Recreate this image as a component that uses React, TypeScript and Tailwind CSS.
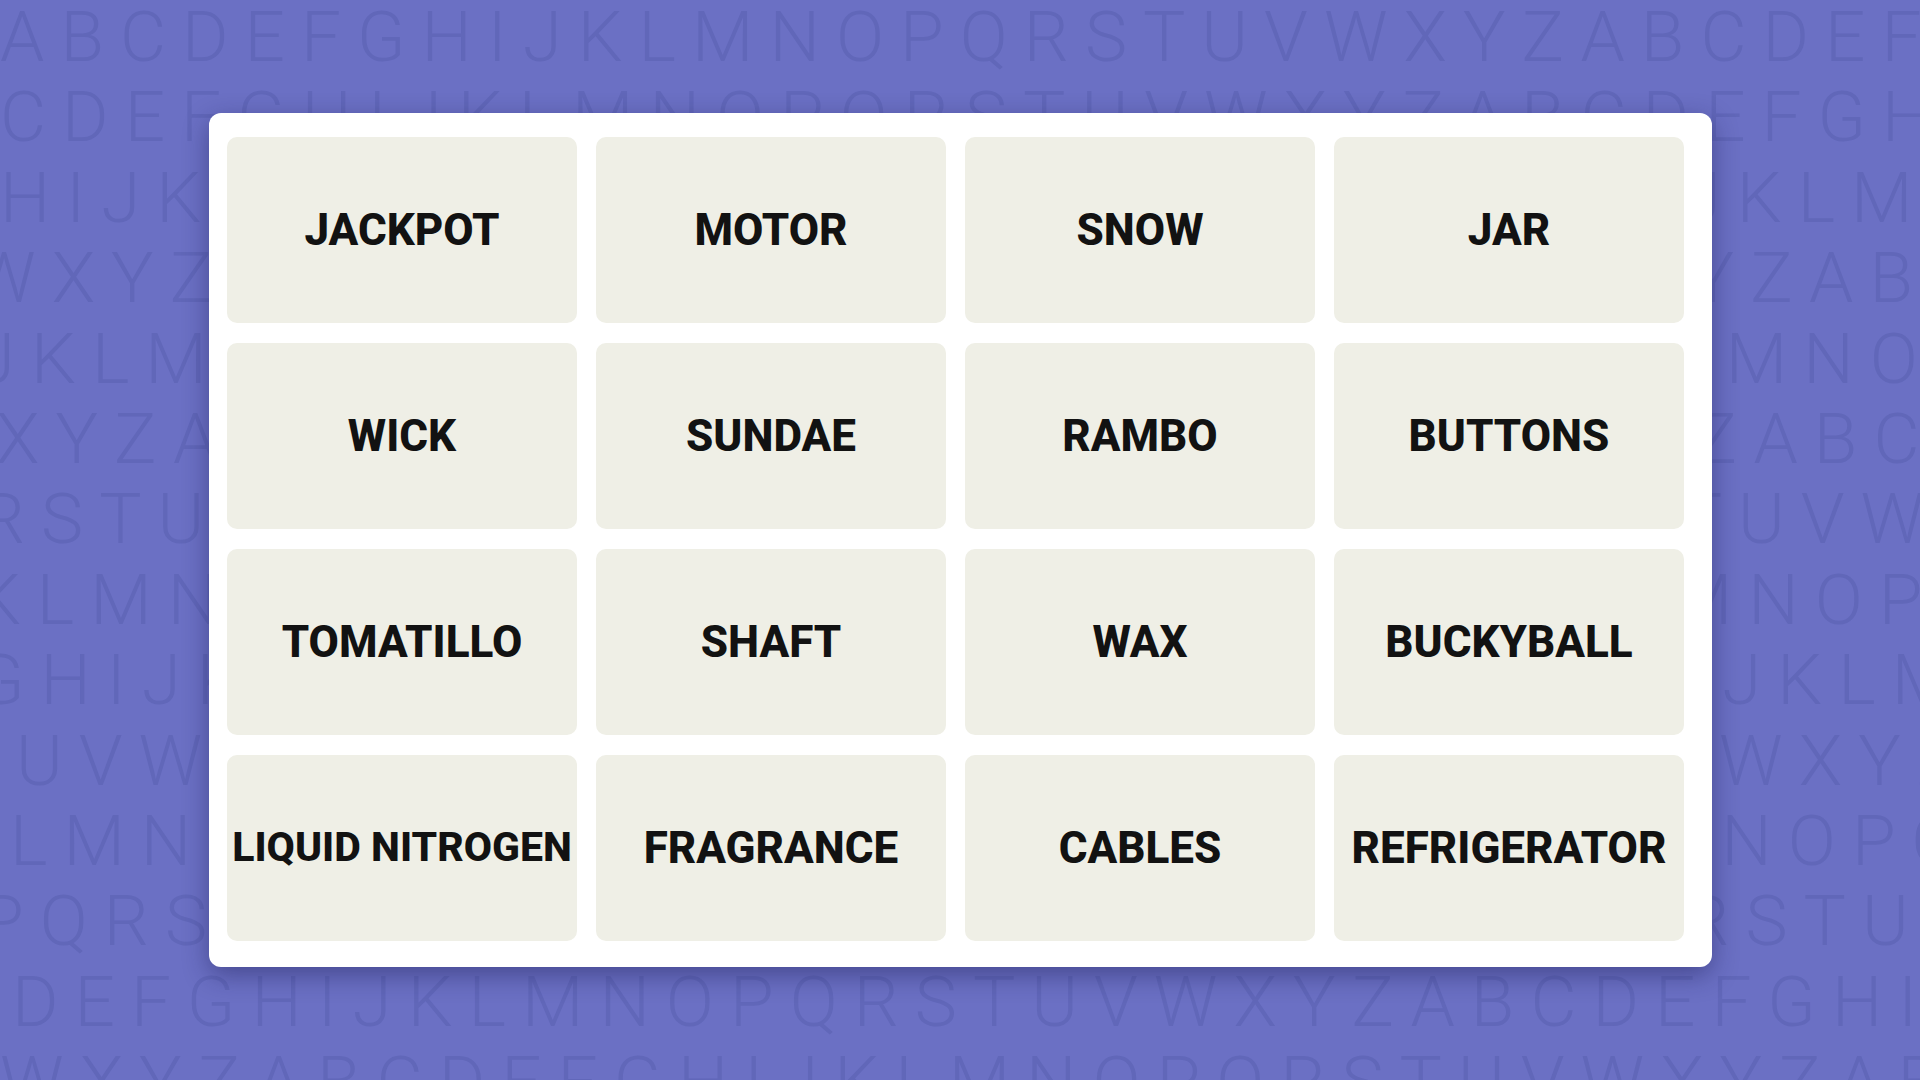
const WORDS = [
  'JACKPOT', 'MOTOR', 'SNOW', 'JAR',
  'WICK', 'SUNDAE', 'RAMBO', 'BUTTONS',
  'TOMATILLO', 'SHAFT', 'WAX', 'BUCKYBALL',
  'LIQUID NITROGEN', 'FRAGRANCE', 'CABLES', 'REFRIGERATOR',
]

const ALPHABET = 'ABCDEFGHIJKLMNOPQRSTUVWXYZ'

// each background line: first letter + left offset in px
const LINES: [string, string][] = [
  ['A', 'ml-0'],
  ['C', 'ml-0'],
  ['H', 'ml-0'],
  ['W', 'ml-[-28px]'],
  ['J', 'ml-[-24px]'],
  ['X', 'ml-[-4px]'],
  ['R', 'ml-[-20px]'],
  ['K', 'ml-[-24px]'],
  ['G', 'ml-[-24px]'],
  ['U', 'ml-[16px]'],
  ['L', 'ml-[10px]'],
  ['P', 'ml-[-20px]'],
  ['D', 'ml-[12px]'],
  ['W', 'ml-0'],
]

function lettersFrom(start: string) {
  const i = ALPHABET.indexOf(start)
  const s = ALPHABET.slice(i) + ALPHABET + ALPHABET
  return s.slice(0, 40)
}

function LetterWall() {
  return (
    <div className="pointer-events-none absolute inset-0 -top-[3px] overflow-hidden select-none">
      {LINES.map(([start, offset], i) => (
        <div
          key={i}
          className={`${offset} h-[80.4px] whitespace-nowrap text-[71px] leading-[80.4px] font-light tracking-[16px] text-[#6167b9] [font-family:Roboto,'Liberation_Sans',sans-serif]`}
        >
          {lettersFrom(start)}
        </div>
      ))}
    </div>
  )
}

function Tile({ word }: { word: string }) {
  const small = word.length > 12
  return (
    <div className="flex h-[186px] w-[350px] items-center justify-center rounded-[10px] bg-[#efefe6]">
      <span
        className={`${small ? 'text-[41px]' : 'text-[44px]'} whitespace-nowrap font-extrabold text-[#121212] [font-family:Roboto,'Liberation_Sans',sans-serif]`}
      >
        {word}
      </span>
    </div>
  )
}

export default function App() {
  return (
    <div className="relative h-[1080px] w-[1920px] overflow-hidden bg-[#6b70c4]">
      <LetterWall />
      <div className="relative pl-[209px] pt-[113px]">
        <div className="w-[1503px] rounded-[12px] bg-white pb-[26px] pl-[18px] pr-[28px] pt-[24px] shadow-[0_8px_26px_rgba(25,25,80,0.45)]">
          <div className="grid grid-cols-[repeat(4,350px)] gap-x-[19px] gap-y-[20px]">
            {WORDS.map((w) => (
              <Tile key={w} word={w} />
            ))}
          </div>
        </div>
      </div>
    </div>
  )
}
